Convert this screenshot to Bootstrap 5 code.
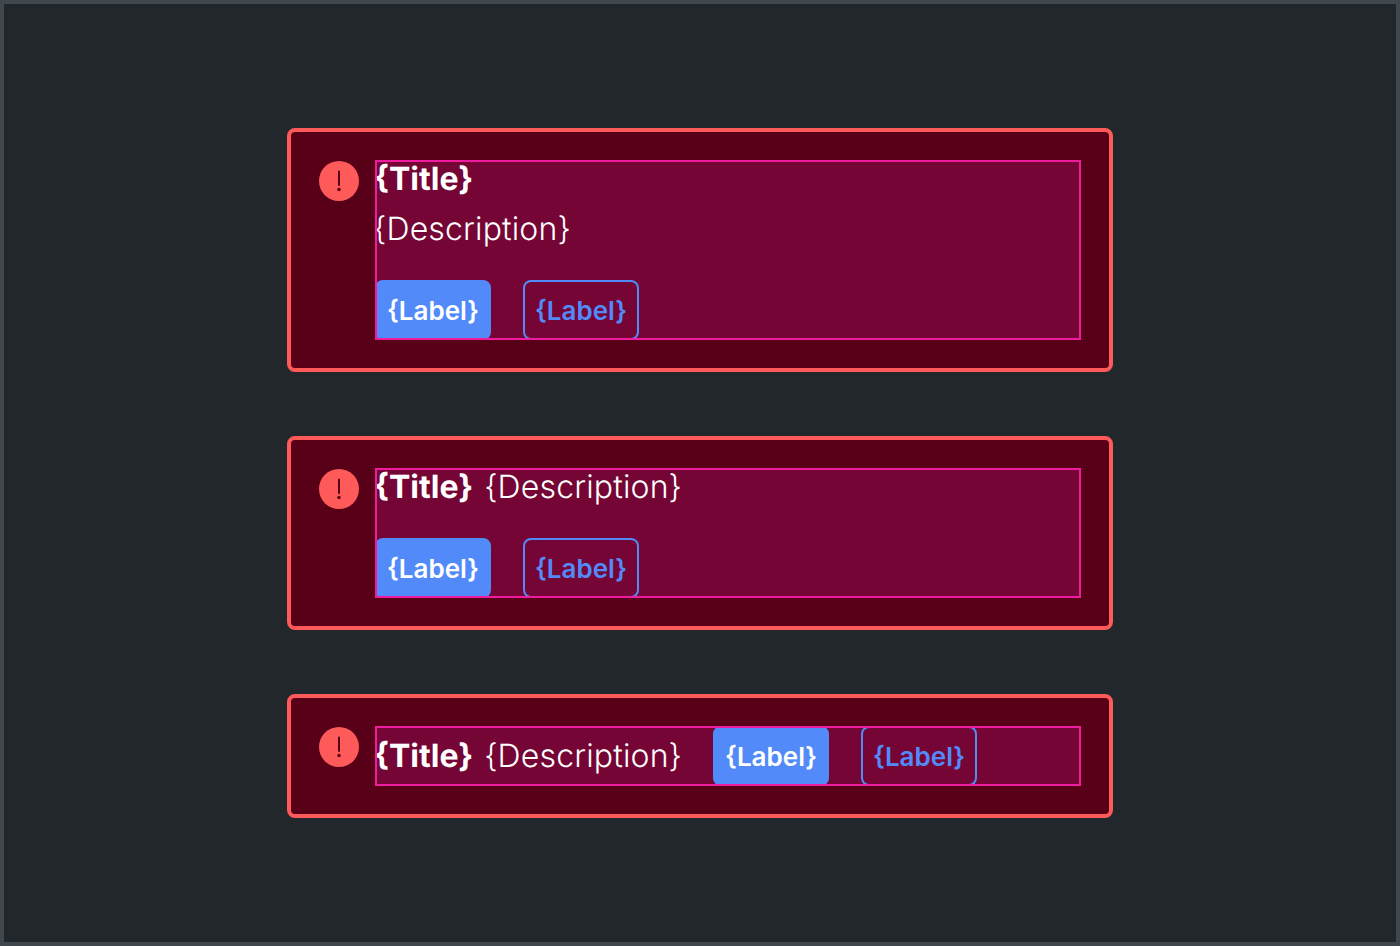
<!DOCTYPE html>
<html lang="en">

<head>
    <meta charset="UTF-8">
    <meta name="viewport" content="width=device-width, initial-scale=1">
    <title>Alert variants</title>
    <link href="https://cdn.jsdelivr.net/npm/bootstrap@5.3.3/dist/css/bootstrap.min.css" rel="stylesheet">
    <style>
        body {
            background: #22272b;
            font-family: "Inter", "Liberation Sans", sans-serif;
            text-rendering: geometricPrecision;
        }

        .frame {
            height: 946px;
            border: 4px solid #41484d;
            gap: 64px;
        }

        .alert-box {
            width: 826px;
            padding: 28px;
            gap: 16px;
            background: #570018;
            border: 4px solid #ff5a5a;
            border-radius: 8px;
        }

        .alert-icon {
            width: 40px;
            height: 40px;
            margin-top: 1px;
        }

        .alert-body {
            outline: 2px solid #ef1ca0;
            outline-offset: -2px;
            background: #750535;
            color: #fff;
            font-size: 32px;
            line-height: 38px;
        }

        .alert-title {
            margin-left: -1px;
            font-weight: 700;
        }

        .alert-text {
            margin-left: -1px;
            font-weight: 300;
            letter-spacing: .15px;
        }

        .alert-text.stacked {
            margin-left: -2px;
        }

        .title-row {
            gap: 12px;
            margin-right: -1px;
        }

        .action-row {
            gap: 32px;
        }

        .btn.btn-fill,
        .btn.btn-line {
            width: 116px;
            height: 60px;
            padding: 2px 0 0;
            font-size: 26px;
            font-weight: 600;
            border-radius: 8px;
            border: 2px solid #528bf9;
            line-height: 1;
        }

        .btn.btn-fill {
            background: #528bf9;
            color: #fff;
        }

        .btn.btn-line {
            background: transparent;
            color: #528bf9;
        }
    </style>
</head>

<body>
    <div class="frame d-flex flex-column justify-content-center align-items-center">

        <div class="alert-box d-flex align-items-start">
            <svg class="alert-icon flex-shrink-0" viewBox="0 0 40 40">
                <circle cx="20" cy="20" r="20" fill="#ff5a5a" />
                <path d="M20 10.5v13.5" stroke="#570018" stroke-width="2" stroke-linecap="round" />
                <circle cx="20" cy="28.5" r="1.75" fill="#570018" />
            </svg>
            <div class="alert-body flex-grow-1 d-flex flex-column">
                <div class="alert-title">{Title}</div>
                <div class="alert-text stacked mt-2 pt-1">{Description}</div>
                <div class="action-row d-flex mt-4 pt-2">
                    <button type="button" class="btn btn-fill">{Label}</button>
                    <button type="button" class="btn btn-line">{Label}</button>
                </div>
            </div>
        </div>

        <div class="alert-box d-flex align-items-start">
            <svg class="alert-icon flex-shrink-0" viewBox="0 0 40 40">
                <circle cx="20" cy="20" r="20" fill="#ff5a5a" />
                <path d="M20 10.5v13.5" stroke="#570018" stroke-width="2" stroke-linecap="round" />
                <circle cx="20" cy="28.5" r="1.75" fill="#570018" />
            </svg>
            <div class="alert-body flex-grow-1 d-flex flex-column">
                <div class="title-row d-flex">
                    <span class="alert-title">{Title}</span>
                    <span class="alert-text">{Description}</span>
                </div>
                <div class="action-row d-flex mt-4 pt-2">
                    <button type="button" class="btn btn-fill">{Label}</button>
                    <button type="button" class="btn btn-line">{Label}</button>
                </div>
            </div>
        </div>

        <div class="alert-box d-flex align-items-start">
            <svg class="alert-icon flex-shrink-0" viewBox="0 0 40 40">
                <circle cx="20" cy="20" r="20" fill="#ff5a5a" />
                <path d="M20 10.5v13.5" stroke="#570018" stroke-width="2" stroke-linecap="round" />
                <circle cx="20" cy="28.5" r="1.75" fill="#570018" />
            </svg>
            <div class="alert-body flex-grow-1 d-flex align-items-center action-row">
                <div class="title-row d-flex">
                    <span class="alert-title">{Title}</span>
                    <span class="alert-text">{Description}</span>
                </div>
                <button type="button" class="btn btn-fill">{Label}</button>
                <button type="button" class="btn btn-line">{Label}</button>
            </div>
        </div>

    </div>

    <script src="https://cdn.jsdelivr.net/npm/bootstrap@5.3.3/dist/js/bootstrap.bundle.min.js"></script>
</body>

</html>
